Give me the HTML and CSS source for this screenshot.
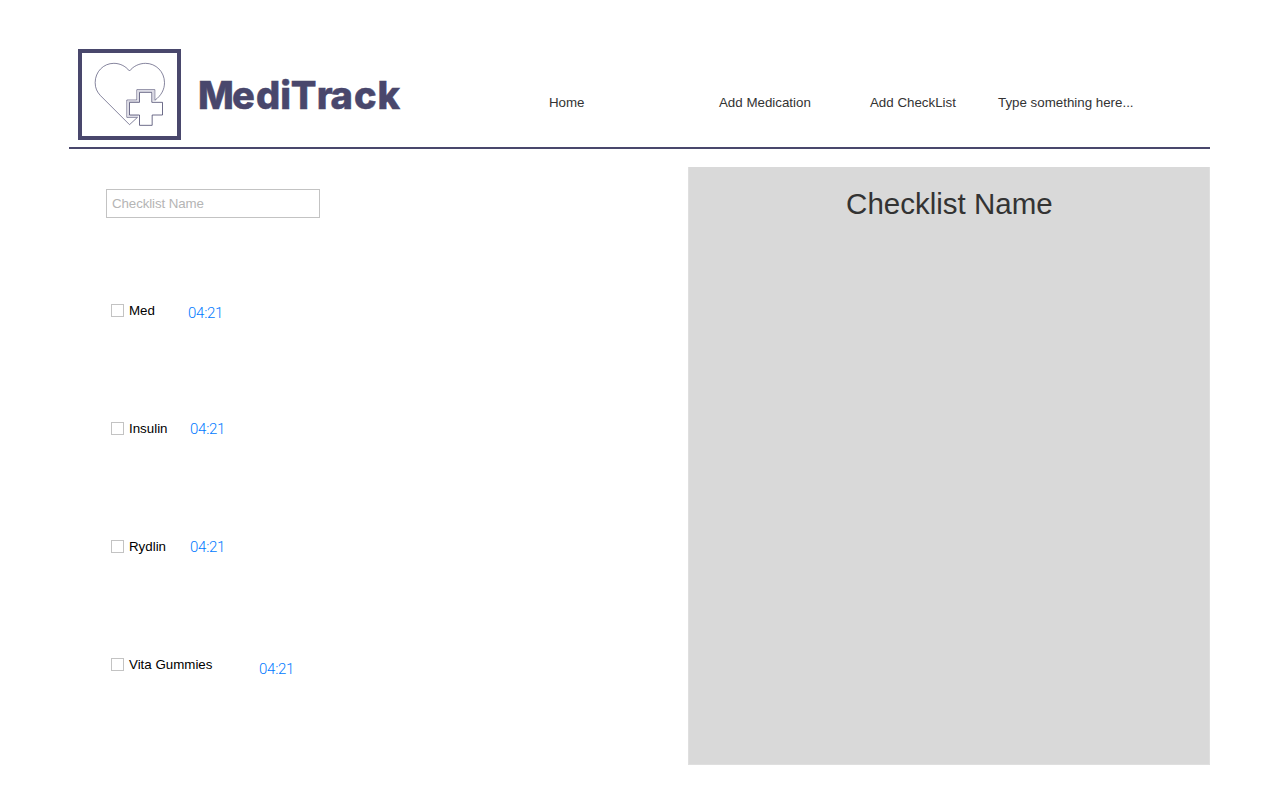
FILE: index.html
```html
<!DOCTYPE html>
<html lang="en">
<head>
<meta charset="utf-8">
<title>MediTrack</title>
<link rel="stylesheet" href="styles.css">
</head>
<body>
<div class="page">
  <header class="header">
    <div class="logo">
      <svg class="logo-icon" viewBox="36 39 284 249" fill="none" stroke="#49476c">
        <path stroke-width="2" d="M178 93C165 77 148 70 131 70C100 70 75 95 75 128C75 145 81 156 91 167L178 254L202 232H170V180H200V149H254V181C274 166 283 148 283 128C283 95 257 70 226 70C208 70 190 78 178 93Z"/>
        <path stroke="#d9d8e3" stroke-width="4" d="M204 228H174V184H204V153H250V182"/>
        <path stroke-width="2.4" d="M208 157H245V187H277V225H246V256H208V225H178V187H208Z"/>
      </svg>
    </div>
    <svg class="brand" width="210" height="44"><text x="-1 33 57 81.2 91.7 117.8 131.5 155 178.4" y="36">MediTrack</text></svg>
    <nav class="nav">
      <a class="home">Home</a>
      <a class="medication">Add Medication</a>
      <a class="checklist">Add CheckList</a>
      <a class="prompt">Type something here...</a>
    </nav>
  </header>
  <main class="content">
    <form class="form">
      <input class="name" type="text" placeholder="Checklist Name">
      <div class="row"><label><i class="box"></i><span class="med">Med</span></label><time class="t1">04:21</time></div>
      <div class="row"><label><i class="box"></i><span class="insulin">Insulin</span></label><time class="t2">04:21</time></div>
      <div class="row"><label><i class="box"></i><span class="rydlin">Rydlin</span></label><time class="t3">04:21</time></div>
      <div class="row"><label><i class="box"></i><span class="vita">Vita Gummies</span></label><time class="t4">04:21</time></div>
    </form>
    <section class="panel"><h1>Checklist Name</h1></section>
  </main>
</div>
</body>
</html>
```
FILE: styles.css
```css
* { box-sizing: border-box; }
body { margin: 0; background: #fff; font-family: "Liberation Sans", Arial, sans-serif; font-size: 13.33px; color: #333; }
.page { width: 1141px; margin-left: 69.4px; padding-top: 49px; }
.header { display: flex; align-items: flex-start; height: 100px; padding-left: 8.6px; border-bottom: 2px solid #49476c; }
.logo { width: 103px; height: 91px; border: 4px solid #49476c; flex: none; }
.logo-icon { display: block; width: 95px; height: 83px; }
.brand { flex: none; margin: 24px 0 0 18px; overflow: visible; }
.brand text { font: 800 38px Inter, sans-serif; fill: #49476c; stroke: #49476c; stroke-width: 0.5px; }
.nav { display: flex; margin-left: 140px; padding-top: 46px; line-height: 16px; white-space: nowrap; letter-spacing: 0; }
.nav a { flex: none; }
.home { width: 170px; }
.medication { width: 151px; }
.checklist { width: 128px; }
.content { display: flex; justify-content: space-between; padding-top: 18px; }
.form { width: 400px; padding: 22px 0 0 36.6px; }
.name { display: block; width: 214px; height: 29px; margin-bottom: 78px; padding: 0 5px; border: 1px solid #c3c3c3; border-radius: 0; font: inherit; letter-spacing: -0.1px; }
.name::placeholder { color: #b5b5b5; opacity: 1; }
.row { display: flex; align-items: flex-start; height: 118px; padding-left: 5px; color: #000; line-height: 16px; }
.row label { display: flex; padding-top: 7px; }
.box { width: 13px; height: 13px; margin: 1px 5px 0 0; border: 1px solid #c3c3c3; }
.row label span { white-space: nowrap; }
.med { width: 59px; }
.insulin, .rydlin { width: 61px; }
.vita { width: 130px; }
.row time { font: 300 15px/18px Roboto, sans-serif; letter-spacing: -0.25px; color: #007aff; padding-top: 8px; }
.row .t2, .row .t3 { padding-top: 6px; }
.row .t4 { padding-top: 10px; }
.panel { width: 522px; height: 598px; background: #d9d9d9; border: 1px solid #dfdfdf; border-top: 0; }
.panel h1 { margin: 19px 0 0; font-size: 29.5px; font-weight: 400; line-height: 36px; letter-spacing: 0; text-align: center; }
```
